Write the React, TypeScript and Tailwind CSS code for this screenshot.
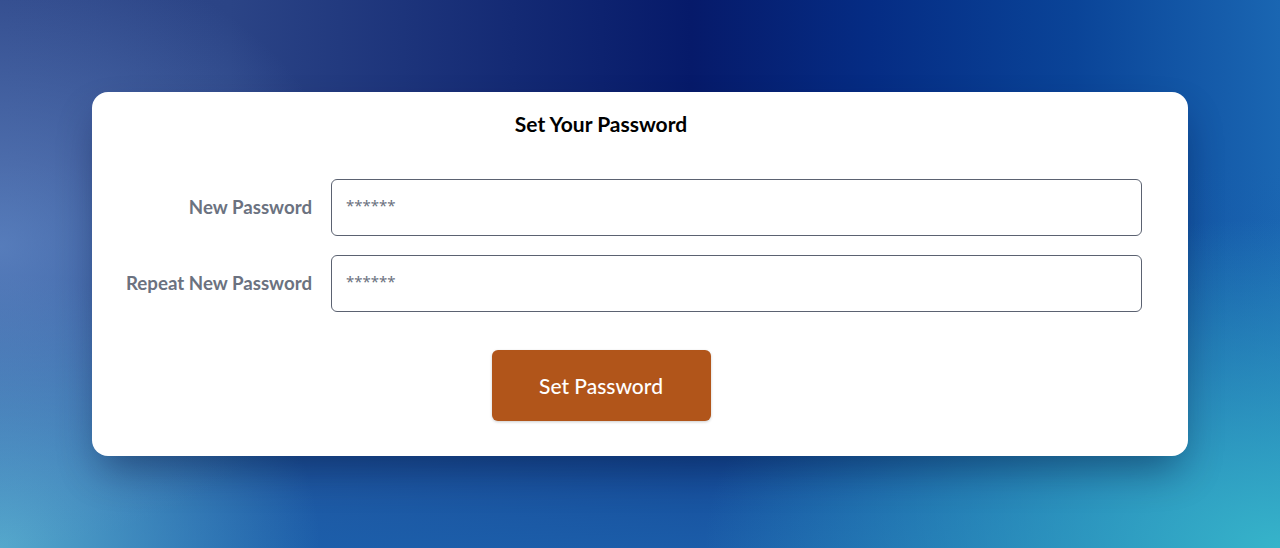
import React from "react";

export default function App() {
  return (
    <div
      className="w-full h-[548px] flex items-center justify-center bg-[#123a8a] bg-[image:radial-gradient(ellipse_28%_55%_at_0%_45%,rgba(105,145,205,0.7),transparent),radial-gradient(ellipse_45%_60%_at_100%_100%,#36b4ca,transparent),radial-gradient(ellipse_25%_50%_at_0%_100%,#55a8cc,transparent),linear-gradient(to_bottom,transparent_30%,rgba(28,96,172,0.95)_100%),linear-gradient(90deg,#2e4688_0%,#2b4486_18%,#142a74_40%,#061a6a_54%,#052c84_68%,#0a4498_84%,#1a66b2_100%)]"
      style={{ fontFamily: "Lato, 'Noto Sans', sans-serif" }}
    >
      <div className="w-[1096px] h-[364px] bg-white rounded-2xl shadow-[0_20px_40px_-8px_rgba(0,10,50,0.45)] flex flex-col pt-[18px]">
        <div className="flex justify-center pr-[78px]">
          <h1 className="text-[21px] leading-7 font-bold text-black">Set Your Password</h1>
        </div>
        <div className="mt-[41px] grid grid-cols-[196px_1fr] gap-x-[19px] gap-y-[19px] pl-6 pr-[46px] items-center">
          <label className="text-right text-[18.7px] font-bold text-[#6b7280]">New Password</label>
          <input
            type="password"
            placeholder="******"
            className="h-[57px] w-full rounded-md border border-[#5b6271] px-[14px] pb-[6px] text-[15px] text-gray-700 placeholder:text-[#6b7280] outline-none font-['Noto_Sans',sans-serif]"
          />
          <label className="text-right text-[18.7px] font-bold text-[#6b7280]">Repeat New Password</label>
          <input
            type="password"
            placeholder="******"
            className="h-[57px] w-full rounded-md border border-[#5b6271] px-[14px] pb-[6px] text-[15px] text-gray-700 placeholder:text-[#6b7280] outline-none font-['Noto_Sans',sans-serif]"
          />
        </div>
        <div className="mt-[38px] flex justify-center pr-[78px]">
          <button className="w-[219px] h-[71px] rounded-md bg-[#b1551a] text-white text-[21px] font-medium shadow-[0_1px_3px_rgba(0,0,0,0.2)]">
            Set Password
          </button>
        </div>
      </div>
    </div>
  );
}
